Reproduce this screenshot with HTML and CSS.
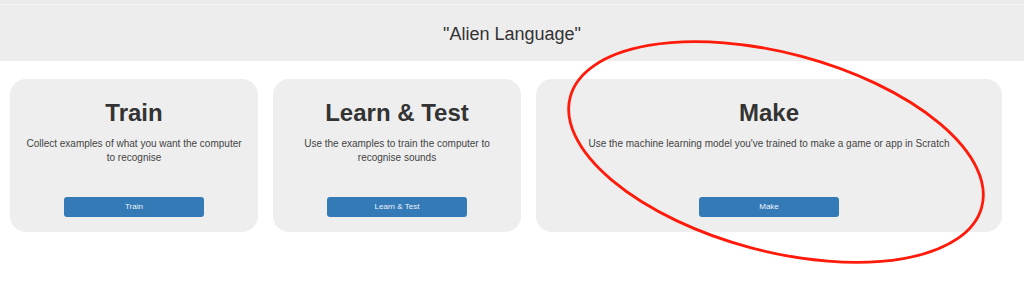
FILE: index.html
```html
<!DOCTYPE html>
<html lang="en">
<head>
<meta charset="utf-8">
<title>Alien Language</title>
<link rel="stylesheet" href="styles.css">
</head>
<body>
<header class="project-header">
  <h1 class="project-name">"Alien Language"</h1>
</header>
<main class="steps">
  <section class="step">
    <h2 class="step-title">Train</h2>
    <p class="step-desc">Collect examples of what you want the computer to recognise</p>
    <button class="step-btn" type="button">Train</button>
  </section>
  <section class="step">
    <h2 class="step-title">Learn &amp; Test</h2>
    <p class="step-desc">Use the examples to train the computer to recognise sounds</p>
    <button class="step-btn" type="button">Learn &amp; Test</button>
  </section>
  <section class="step">
    <h2 class="step-title">Make</h2>
    <p class="step-desc">Use the machine learning model you've trained to make a game or app in Scratch</p>
    <button class="step-btn" type="button">Make</button>
  </section>
</main>
<svg class="annotation" width="1024" height="288" viewBox="0 0 1024 288" aria-hidden="true">
  <ellipse cx="776" cy="152" rx="213" ry="99" transform="rotate(15 776 152)" fill="none" stroke="#ff1a0a" stroke-width="2.8"/>
</svg>
</body>
</html>
```
FILE: styles.css
```css
html, body {
  margin: 0;
  padding: 0;
  background: #ffffff;
  font-family: "Liberation Sans", Arial, sans-serif;
  color: #333333;
}

body {
  position: relative;
  width: 1024px;
  height: 288px;
  overflow: hidden;
}

.project-header {
  box-sizing: border-box;
  height: 61px;
  padding-top: 20px;
  background: #ededed;
  border-top: 4px solid #ebebeb;
  box-shadow: inset 0 1px 0 #f3f3f3;
  text-align: center;
}

.project-name {
  margin: 0;
  font-size: 18px;
  line-height: 20px;
  font-weight: normal;
  color: #333333;
}

.steps {
  display: grid;
  grid-template-columns: 248px 248px 466px;
  column-gap: 15px;
  padding: 18px 0 0 10px;
}

.step {
  box-sizing: border-box;
  height: 153px;
  display: flex;
  flex-direction: column;
  align-items: center;
  padding: 20px 12px 15px;
  background: #eeeeee;
  border-radius: 16px;
  text-align: center;
}

.step-title {
  margin: 0;
  font-size: 24px;
  line-height: 28px;
  font-weight: bold;
  color: #333333;
}

.step-desc {
  margin: 10px 0 0;
  font-size: 10px;
  line-height: 14px;
  color: #444444;
}

.step-btn {
  margin-top: auto;
  width: 140px;
  height: 20px;
  padding: 0;
  border: none;
  border-radius: 3px;
  background: #337ab7;
  color: #eef3f9;
  font-family: "Liberation Sans", Arial, sans-serif;
  font-size: 8px;
  line-height: 20px;
}

.annotation {
  position: absolute;
  left: 0;
  top: 0;
  pointer-events: none;
}
```
